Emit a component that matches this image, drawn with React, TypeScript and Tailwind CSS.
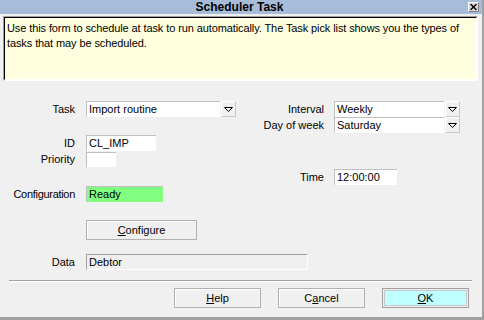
const font = { fontFamily: '"Liberation Sans", Arial, sans-serif' };

const DropArrow = () => (
    <div className="flex h-full w-[15px] items-center justify-center border border-[#c8c8c8] border-t-white border-l-white bg-[#f0f0f0]">
        <svg width="9" height="5" viewBox="0 0 9 5">
            <path d="M0.5 0.5 H8.5 L4.5 4.5 Z" fill="none" stroke="#000" strokeWidth="1" />
        </svg>
    </div>
);

const Field = ({ value, width, bg = "bg-white" }: { value: string; width: string; bg?: string }) => (
    <div className={`flex h-full items-center border-t border-l border-[#c0c0c0] pl-[2px] ${width} ${bg}`}>
        {value}
    </div>
);

const Combo = ({ value, width }: { value: string; width: string }) => (
    <div className="flex h-full gap-[1px]">
        <Field value={value} width={width} />
        <DropArrow />
    </div>
);

const Row = ({ label, labelWidth, gap, className, children }: { label: string; labelWidth: string; gap: string; className: string; children: React.ReactNode }) => (
    <div className={`flex items-center ${gap} ${className}`}>
        <span className={`text-right whitespace-nowrap ${labelWidth}`}>{label}</span>
        {children}
    </div>
);

const Btn = ({ children, primary = false }: { children: React.ReactNode; primary?: boolean }) =>
    primary ? (
        <div className="h-[20px] w-[87px] border border-[#a0a0a0] p-[1px]">
            <div className="flex h-full items-center justify-center border border-[#c8c8c8] bg-[#c0ffff]">{children}</div>
        </div>
    ) : (
        <div className="flex h-[20px] w-[87px] items-center justify-center border border-[#b0b0b0] bg-[#f0f0f0] shadow-[inset_1px_1px_0_#ffffff]">
            {children}
        </div>
    );

export default function App() {
    return (
        <div style={font} className="flex h-[320px] w-[484px] flex-col overflow-hidden border-r-2 border-b-[3px] border-[#a0a0a0] bg-[#f0f0f0] text-[11px] text-black">
            {/* title bar */}
            <div className="flex h-[14px] items-center bg-[#a6bcd8]">
                <div className="flex-1" />
                <span className="text-[12px] font-bold leading-none">Scheduler Task</span>
                <div className="flex flex-1 justify-end pr-[3px]">
                    <div className="flex h-[10px] w-[11px] items-center justify-center border border-[#808080] border-t-white border-l-white bg-[#d8d8d8]">
                        <svg width="7" height="6" viewBox="0 0 7 6">
                            <path d="M0.5 0 L6.5 6 M6.5 0 L0.5 6" stroke="#000" strokeWidth="1.4" />
                        </svg>
                    </div>
                </div>
            </div>

            {/* info box */}
            <div className="mt-[2px] ml-[3px] h-[65px] w-[475px] border border-[#a0a0a0] border-r-white border-b-white">
                <div className="h-full border border-black border-r-white border-b-white bg-[#ffffdf] pt-[3px] pl-[2px] leading-[15px] tracking-[-0.1px]">
                    Use this form to schedule at task to run automatically. The Task pick list shows you the types of tasks that may be scheduled.
                </div>
            </div>

            {/* form */}
            <div className="flex">
                <div className="flex w-[263px] flex-col">
                    <Row label="Task" labelWidth="w-[75px]" gap="gap-[11px]" className="mt-[20px] h-[16px]">
                        <Combo value="Import routine" width="w-[134px]" />
                    </Row>
                    <Row label="ID" labelWidth="w-[75px]" gap="gap-[11px]" className="mt-[18px] h-[16px]">
                        <Field value="CL_IMP" width="w-[70px]" />
                    </Row>
                    <Row label="Priority" labelWidth="w-[75px]" gap="gap-[11px]" className="mt-[1px] h-[15px]">
                        <Field value="" width="w-[30px]" />
                    </Row>
                    <Row label="Configuration" labelWidth="w-[75px] tracking-[-0.3px]" gap="gap-[11px]" className="mt-[19px] h-[16px]">
                        <Field value="Ready" width="w-[77px]" bg="bg-[#80ff80]" />
                    </Row>
                </div>
                <div className="flex flex-col">
                    <Row label="Interval" labelWidth="w-[61px]" gap="gap-[10px]" className="mt-[20px] h-[16px]">
                        <Combo value="Weekly" width="w-[110px]" />
                    </Row>
                    <Row label="Day of week" labelWidth="w-[61px]" gap="gap-[10px]" className="h-[16px]">
                        <Combo value="Saturday" width="w-[110px]" />
                    </Row>
                    <Row label="Time" labelWidth="w-[61px]" gap="gap-[10px]" className="mt-[36px] h-[16px]">
                        <Field value="12:00:00" width="w-[63px]" />
                    </Row>
                </div>
            </div>

            <div className="mt-[18px] ml-[86px] flex h-[20px] w-[111px] items-center justify-center border border-[#b0b0b0] shadow-[inset_1px_1px_0_#ffffff]">
                <span>
                    <span className="underline">C</span>onfigure
                </span>
            </div>

            <Row label="Data" labelWidth="w-[75px]" gap="gap-[11px]" className="mt-[14px] h-[16px]">
                <div className="flex h-full w-[222px] items-center border border-[#a0a0a0] border-r-white border-b-white pl-[2px]">Debtor</div>
            </Row>

            <div className="mt-[10px] ml-[9px] w-[463px] border-t border-b border-[#a0a0a0] border-b-white" />

            <div className="mt-[6px] flex gap-[17px] pl-[174px]">
                <Btn>
                    <span className="underline">H</span>elp
                </Btn>
                <Btn>
                    C<span className="underline">a</span>ncel
                </Btn>
                <Btn primary>
                    <span>
                        <span className="underline">O</span>K
                    </span>
                </Btn>
            </div>
        </div>
    );
}
